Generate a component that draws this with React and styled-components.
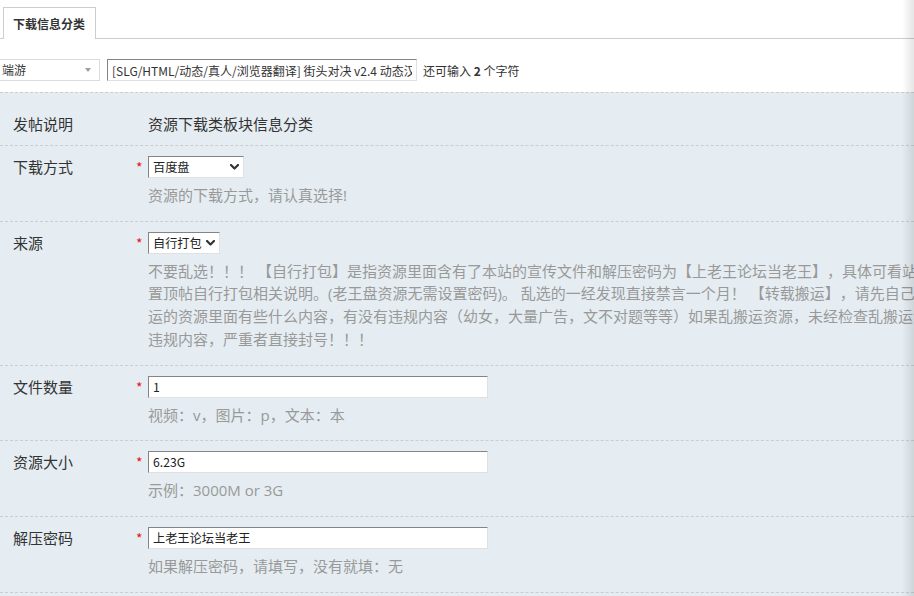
import styled, { createGlobalStyle } from "styled-components";

const GlobalStyle = createGlobalStyle`
  html, body {
    margin: 0;
    padding: 0;
    background: #fff;
    overflow: hidden;
  }
  body {
    font-family: "Noto Sans CJK SC", "Noto Sans", sans-serif;
    color: #333;
    text-spacing-trim: space-all;
  }
`;

const fields = [
  {
    label: "下载方式",
    type: "select",
    value: "百度盘",
    width: 96,
    hint: ["资源的下载方式，请认真选择!"],
  },
  {
    label: "来源",
    type: "select",
    value: "自行打包",
    width: 72,
    hint: [
      "不要乱选！！！ 【自行打包】是指资源里面含有了本站的宣传文件和解压密码为【上老王论坛当老王】，具体可看站务区",
      "置顶帖自行打包相关说明。(老王盘资源无需设置密码)。 乱选的一经发现直接禁言一个月！ 【转载搬运】，请先自己检查搬",
      "运的资源里面有些什么内容，有没有违规内容（幼女，大量广告，文不对题等等）如果乱搬运资源，未经检查乱搬运含有",
      "违规内容，严重者直接封号！！！",
    ],
  },
  { label: "文件数量", type: "input", value: "1", hint: ["视频：v，图片：p，文本：本"] },
  { label: "资源大小", type: "input", value: "6.23G", hint: ["示例：3000M or 3G"] },
  {
    label: "解压密码",
    type: "input",
    value: "上老王论坛当老王",
    hint: ["如果解压密码，请填写，没有就填：无"],
  },
];

export default function App() {
  return (
    <>
      <GlobalStyle />
      <Page>
        <TabBar>
          <Tab>下载信息分类</Tab>
        </TabBar>

        <TitleRow>
          <TypeSelect>
            <span>端游</span>
            <Triangle />
          </TypeSelect>
          <SubjectInput
            readOnly
            value="[SLG/HTML/动态/真人/浏览器翻译] 街头对决 v2.4 动态汉化版"
          />
          <Counter>
            还可输入 <strong>2</strong> 个字符
          </Counter>
        </TitleRow>

        <FormArea>
          <Row $first>
            <Label>发帖说明</Label>
            <Star />
            <Value>资源下载类板块信息分类</Value>
          </Row>

          {fields.map((f) => (
            <Row key={f.label}>
              <Label>{f.label}</Label>
              <Star>*</Star>
              <Field>
                {f.type === "select" ? (
                  <Select $width={f.width}>
                    <span>{f.value}</span>
                    <Chevron viewBox="0 0 9 6">
                      <path d="M1 1l3.5 3.5L8 1" />
                    </Chevron>
                  </Select>
                ) : (
                  <TextInput readOnly value={f.value} />
                )}
                <Hint>
                  {f.hint.map((line) => (
                    <HintLine key={line}>{line}</HintLine>
                  ))}
                </Hint>
              </Field>
            </Row>
          ))}
        </FormArea>

        <EdgeShade />
      </Page>
    </>
  );
}

const Page = styled.div`
  position: relative;
  display: flex;
  flex-direction: column;
  width: 914px;
  height: 596px;
  overflow: hidden;
  background: #fff;
`;

const TabBar = styled.div`
  display: flex;
  align-items: flex-end;
  height: 38px;
  padding-left: 3px;
  border-bottom: 1px solid #cdcdcd;
  flex-shrink: 0;
`;

const Tab = styled.div`
  height: 31px;
  margin-bottom: -1px;
  padding: 0 10px 0 9px;
  border: 1px solid #cdcdcd;
  border-bottom: 0;
  background: #fff;
  font-size: 12px;
  font-weight: bold;
  line-height: 31px;
  color: #333;
`;

const TitleRow = styled.div`
  display: flex;
  align-items: center;
  padding: 20px 0 11px;
  flex-shrink: 0;
`;

const TypeSelect = styled.div`
  box-sizing: border-box;
  display: flex;
  align-items: center;
  justify-content: space-between;
  width: 101px;
  height: 22px;
  margin-left: -1px;
  padding: 0 8px 0 2px;
  border: 1px solid #dcdcdc;
  background: #fff;
  font-size: 12px;
  line-height: 20px;
  color: #333;
`;

const Triangle = styled.i`
  width: 0;
  height: 0;
  border-left: 3.5px solid transparent;
  border-right: 3.5px solid transparent;
  border-top: 4px solid #a0a0a0;
`;

const discuzBorder = `
  border: 1px solid;
  border-color: #848484 #e0e0e0 #e0e0e0 #848484;
`;

const SubjectInput = styled.input`
  box-sizing: border-box;
  width: 310px;
  height: 22px;
  margin-left: 7px;
  padding: 0 4px;
  ${discuzBorder}
  background: #fff;
  font-family: inherit;
  font-size: 12px;
  color: #333;
  outline: none;
`;

const Counter = styled.span`
  margin-left: 6px;
  font-size: 12px;
  color: #333;
  white-space: pre;

  strong {
    font-weight: bold;
  }
`;

const FormArea = styled.div`
  flex: 1;
  background: #e5edf2;
  border-top: 1px dashed #cdcdcd;
`;

const Row = styled.div`
  display: grid;
  grid-template-columns: 122px 13px 1fr;
  align-items: start;
  padding: ${({ $first }) => ($first ? "20px 0 10px 13px" : "10px 0 14px 13px")};
  border-bottom: 1px dashed #cdcdcd;
`;

const Label = styled.div`
  font-size: 15px;
  line-height: 22px;
  color: #333;
  white-space: nowrap;
`;

const Star = styled.span`
  padding-left: 1px;
  font-size: 14px;
  line-height: 22px;
  color: #e21919;
`;

const Value = styled.div`
  font-size: 15px;
  line-height: 22px;
  color: #333;
`;

const Field = styled.div`
  display: flex;
  flex-direction: column;
  align-items: flex-start;
  min-width: 0;
`;

const Select = styled.div`
  box-sizing: border-box;
  display: flex;
  align-items: center;
  justify-content: space-between;
  width: ${({ $width }) => $width}px;
  height: 22px;
  padding: 0 4px;
  ${discuzBorder}
  background: #fff;
  font-size: 12.2px;
  line-height: 20px;
  color: #222;
`;

const Chevron = styled.svg`
  width: 9px;
  height: 6px;
  fill: none;
  stroke: #333;
  stroke-width: 2.2;
  stroke-linecap: round;
  stroke-linejoin: round;
`;

const TextInput = styled.input`
  box-sizing: border-box;
  width: 340px;
  height: 22px;
  padding: 0 4px;
  ${discuzBorder}
  background: #fff;
  font-family: inherit;
  font-size: 12.2px;
  color: #222;
  outline: none;
`;

const Hint = styled.div`
  margin-top: 6px;
  font-family: "Open Sans", "Noto Sans CJK SC", sans-serif;
  font-size: 15px;
  line-height: 22.7px;
  color: #999;
`;

const HintLine = styled.div`
  white-space: nowrap;
`;

const EdgeShade = styled.div`
  position: absolute;
  top: 0;
  right: 0;
  bottom: 0;
  width: 12px;
  background: linear-gradient(to right, rgba(0, 0, 0, 0), rgba(0, 0, 0, 0.1));
  pointer-events: none;
`;
